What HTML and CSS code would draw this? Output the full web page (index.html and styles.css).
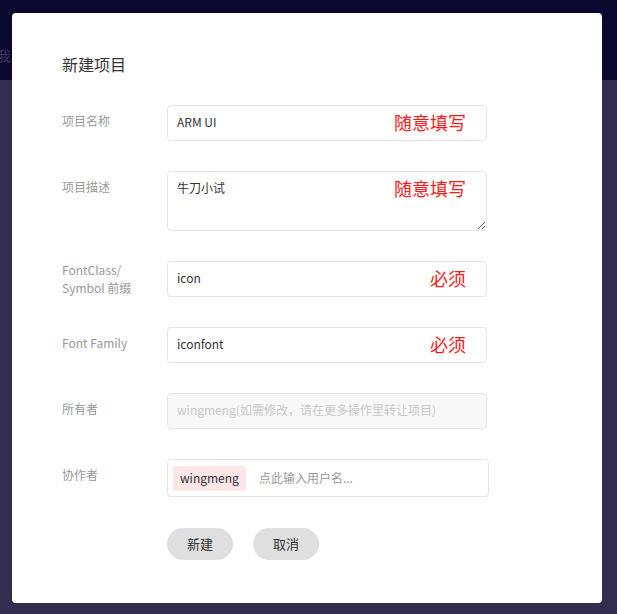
FILE: index.html
```html
<!DOCTYPE html>
<html lang="zh-CN">
<head>
<meta charset="utf-8">
<title>新建项目</title>
<link rel="stylesheet" href="styles.css">
</head>
<body>
<header class="topbar"><span class="nav-text">我的项目</span></header>
<main class="page"></main>

<div class="modal">
  <h2 class="modal-title">新建项目</h2>

  <div class="row">
    <label class="label">项目名称</label>
    <div class="field">
      <input class="input" type="text" value="ARM UI">
      <span class="note">随意填写</span>
    </div>
  </div>

  <div class="row">
    <label class="label">项目描述</label>
    <div class="field">
      <textarea class="input textarea">牛刀小试</textarea>
      <span class="note note-top">随意填写</span>
    </div>
  </div>

  <div class="row">
    <label class="label label-two">FontClass/<br>Symbol 前缀</label>
    <div class="field">
      <input class="input" type="text" value="icon">
      <span class="note">必须</span>
    </div>
  </div>

  <div class="row">
    <label class="label">Font Family</label>
    <div class="field">
      <input class="input" type="text" value="iconfont">
      <span class="note">必须</span>
    </div>
  </div>

  <div class="row">
    <label class="label">所有者</label>
    <div class="field">
      <input class="input input-disabled" type="text" disabled value="wingmeng(如需修改，请在更多操作里转让项目)">
    </div>
  </div>

  <div class="row">
    <label class="label">协作者</label>
    <div class="field">
      <div class="tags">
        <span class="tag">wingmeng</span>
        <input class="tag-input" type="text" placeholder="点此输入用户名...">
      </div>
    </div>
  </div>

  <div class="actions">
    <button class="btn">新建</button>
    <button class="btn">取消</button>
  </div>
</div>
</body>
</html>
```

FILE: styles.css
```css
* { box-sizing: border-box; }

html, body {
  margin: 0;
  padding: 0;
  height: 100%;
}

body {
  background: #332e50;
  font-family: "Noto Sans CJK SC", "Noto Sans", sans-serif;
  font-size: 12px;
  color: #333;
}

.topbar {
  height: 80px;
  background: #0b0830;
  padding-top: 46px;
}

.nav-text {
  display: block;
  margin-left: -3px;
  font-size: 14px;
  line-height: 18px;
  color: #3b3657;
}

.modal {
  position: fixed;
  top: 13px;
  left: 12px;
  width: 590px;
  height: 590px;
  background: #fff;
  border-radius: 4px;
  padding: 40px 50px 0 50px;
}

.modal-title {
  margin: 0 0 30px 0;
  font-size: 16px;
  font-weight: normal;
  line-height: 22px;
  color: #333;
}

.row {
  display: flex;
  align-items: flex-start;
  margin-bottom: 30px;
}

.label {
  width: 105px;
  flex: none;
  padding-top: 7px;
  line-height: 18px;
  font-size: 12px;
  color: #999;
}

.label-two {
  padding-top: 0;
}

.field {
  position: relative;
  width: 320px;
}

.input {
  display: block;
  width: 320px;
  height: 36px;
  border: 1px solid #e5e5e5;
  border-radius: 4px;
  padding: 0 9px 3px 9px;
  font-family: inherit;
  font-size: 12px;
  color: #333;
  background: #fff;
  outline: none;
}

.textarea {
  height: 60px;
  padding: 7px 9px;
  line-height: 18px;
  resize: vertical;
}

.input-disabled {
  background: #f8f8f8;
  color: #c8c8c8;
}

.note {
  position: absolute;
  right: 21px;
  top: 7px;
  font-size: 18px;
  line-height: 20px;
  color: #ff1a1a;
  pointer-events: none;
}

.note-top {
  top: 7px;
}

.tags {
  width: 322px;
  height: 38px;
  border: 1px solid #e5e5e5;
  border-radius: 4px;
  display: flex;
  align-items: center;
  padding: 0 5px;
  gap: 13px;
}

.tag {
  background: #fce6e6;
  color: #333;
  font-size: 12px;
  line-height: 24px;
  height: 25px;
  padding: 0 7px;
  border-radius: 2px;
}

.tag-input {
  flex: 1;
  border: 0;
  outline: none;
  font-family: inherit;
  font-size: 12px;
  color: #333;
  padding: 0 0 2px 0;
  height: 22px;
}

.tag-input::placeholder {
  color: #999;
}

.actions {
  display: flex;
  gap: 20px;
  padding-left: 105px;
  margin-top: 31px;
}

.btn {
  width: 66px;
  height: 32px;
  border: 0;
  border-radius: 16px;
  background: #dfdfdf;
  font-family: inherit;
  font-size: 13px;
  color: #333;
  padding: 0 0 2px 0;
}
```
